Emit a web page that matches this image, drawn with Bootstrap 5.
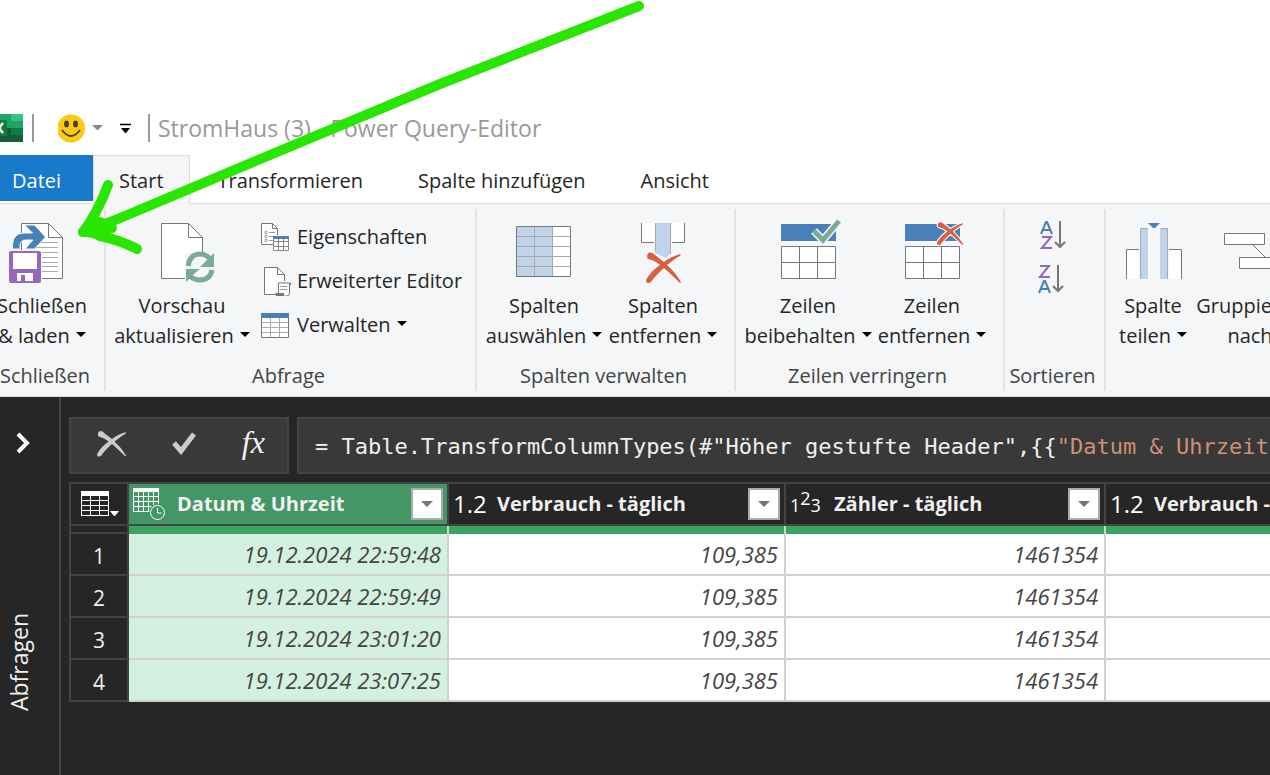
<!DOCTYPE html>
<html lang="de">
<head>
<meta charset="utf-8">
<meta name="viewport" content="width=device-width, initial-scale=1">
<title>StromHaus (3) - Power Query-Editor</title>
<link href="https://cdn.jsdelivr.net/npm/bootstrap@5.3.0/dist/css/bootstrap.min.css" rel="stylesheet">
<style>
  body { font-family: "Open Sans", "Noto Sans", sans-serif; font-size: 20px; line-height: 30px; color: #262626; background: #fff; overflow-x: hidden; }
  svg { display: block; flex: none; }
  button, .tab-link { white-space: nowrap; }

  .titlebar { padding-top: 100px; height: 155px; color: #999; }
  .titlebar .doc-title { font-size: 23px; }
  .divider { width: 2px; height: 28px; background: #999; }
  .plain-btn { border: 0; padding: 0; background: none; color: inherit; }

  .tab-strip { height: 49px; border-bottom: 1px solid #dadbdc; }
  .tab-link { display: flex; align-items: center; height: 49px; padding: 2px 26px 0 27px; color: #262626; text-decoration: none; border: 1px solid transparent; border-bottom: 0; }
  .tab-link.current { background: #f5f6f7; border-color: #dadbdc; padding-left: 25px; padding-right: 25px; }
  .tab-link.file-tab { width: 93px; height: 46px; padding: 4px 11px 0; background: #1979ca; color: #fff; }

  .ribbon { background: #f5f6f7; padding: 5px 0; border-bottom: 1px solid #d5d6d7; overflow: hidden; }
  .ribbon-group { flex: none; display: flex; flex-direction: column; height: 182px; border-right: 2px solid #e2e3e4; }
  .tool-row { display: flex; padding-left: 6px; }
  .group-title { margin-top: auto; padding-right: 4px; line-height: 30px; text-align: center; color: #444; white-space: nowrap; }
  .g-close { width: 106px; padding-right: 20px; }
  .g-query { width: 371px; }
  .g-cols { width: 259px; }
  .g-rows { width: 269px; }
  .g-sort { width: 101px; }
  .g-trans { border: 0; }
  .tool { border: 0; padding: 10px 4px 0; background: none; color: inherit; display: flex; flex-direction: column; align-items: center; flex: none; }
  .tool svg { margin-bottom: 8px; }
  .small-tools { padding: 6px 0 0 9px; }
  .sort-tools { padding: 4px 4px 0 0; }
  .tool-sm { border: 0; padding: 0; height: 44px; background: none; color: inherit; display: flex; align-items: center; gap: 6px; }
  .drop::after { content: ""; display: inline-block; margin-left: 6px; vertical-align: 6px; border: 5px solid transparent; border-top-color: #000; border-bottom: 0; }
  .w-140 { width: 140px; } .w-122 { width: 122px; } .w-116 { width: 116px; } .w-132 { width: 132px; } .w-82 { width: 82px; } .w-104 { width: 104px; }

  .workspace { background: #262626; color: #f0f0f0; }
  .side-rail { flex: none; width: 61px; border-right: 2px solid #444; padding: 34px 14px 64px 4px; }
  .rail-toggle { margin-left: 10px; }
  .rail-label { writing-mode: vertical-rl; transform: rotate(180deg); font-size: 23px; line-height: 30px; }
  .editor-pane { padding: 20px 0 0 8px; min-width: 0; overflow: hidden; }
  .bar-box { height: 57px; background: #393939; border: 2px solid #444; }
  .formula-btns { flex: none; width: 220px; padding: 0 0 4px 4px; }
  .formula-text { border-right: 0; padding-left: 16px; font: 22px/55px "DejaVu Sans Mono", "Liberation Mono", monospace; white-space: pre; overflow: hidden; min-width: 0; }
  .literal { color: #ce9178; }
  .fx { font: italic 32px/40px "Liberation Serif", serif; color: #f0f0f0; }

  .data-grid { table-layout: fixed; width: 1374px; border-collapse: separate; border-spacing: 0; margin-top: 8px; line-height: 30px; }
  .data-grid th, .data-grid td { padding: 0; border: 0 solid #444; border-width: 0 2px 2px 0; }
  .data-grid .idx { border-left-width: 2px; text-align: center; font-weight: 400; color: #f0f0f0; padding-top: 4px; font-size: 21px; }
  .data-grid .corner { border-left-width: 2px; padding-left: 2px; }
  .data-grid thead .head th { border-top-width: 2px; height: 44px; }
  .data-grid .head .on { background: #449667; }
  .data-grid .quality td { height: 8px; line-height: 0; background: #38a560; border-color: #d0d0d0; border-bottom: 0; }
  .data-grid .quality th { height: 8px; line-height: 0; padding: 0; }
  .data-grid tbody td { height: 42px; background: #fff; border-color: #d0d0d0; text-align: right; font-size: 22px; font-style: italic; color: #444; padding-right: 6px; }
  .data-grid tbody .on { background: #d4f0e0; }
  .head-cell { padding: 0 4px; font-weight: 700; white-space: nowrap; }
  .kind { flex: none; width: 44px; font: 500 24px/30px "Open Sans", sans-serif; color: #fff; }
  .kind small { font-size: 18px; }
  .kind .up { position: relative; top: -7px; }
  .filter-btn { width: 32px; height: 32px; padding: 0; border: 2px solid #aaa; background: #fff; }
  .filter-btn::after { content: ""; display: block; width: 0; margin: auto; border: 6px solid transparent; border-top-color: #777; border-bottom: 0; }
  .pointer-arrow { position: absolute; left: 0; top: 0; pointer-events: none; }
</style>
</head>
<body class="d-flex flex-column min-vh-100 position-relative">
<svg width="0" height="0" class="position-absolute" aria-hidden="true">
  <defs>
    <path id="cross" d="M1 5C2 0 6 1 9 4Q14 8 18 11Q24 6 34 3L35 4Q27 9 21 14Q29 21 35 31L34 32Q25 23 18 17Q9 25 5 31Q0 34 0 29Q5 20 14 14Q8 9 2 8Q1 7 1 5Z"/>
  </defs>
</svg>

<header class="titlebar d-flex align-items-center">
  <svg width="24" height="28" viewBox="0 0 24 28" aria-label="Excel">
    <path fill="#21a366" d="M0 0h12v14H0z"/><path fill="#33c481" d="M11 0h11q1 0 1 1v13H11z"/>
    <path fill="#107c41" d="M0 14h23v-7H11v7z"/><path fill="#21a366" d="M11 7h12v7H11z"/><path fill="#107c41" d="M11 14h12v7H11z"/><path fill="#185c37" d="M0 14h11v7h12v7H0z"/>
    <path fill="#107c41" d="M0 6h6q1 0 1 1v14q0 1-1 1H0z"/><path d="M-5 9L3 19M3 9L-5 19" stroke="#fff" stroke-width="2.5"/>
  </svg>
  <span class="divider ms-2"></span>
  <button type="button" class="plain-btn d-flex align-items-center ms-4" aria-label="Smiley senden">
    <svg width="46" height="30" viewBox="1 0 46 30"><circle cx="14" cy="15.500" r="14" fill="#fdca12"/><ellipse cx="9.500" cy="11" rx="2.500" ry="3.500" fill="#444"/><ellipse cx="18.500" cy="11" rx="2.500" ry="3.500" fill="#444"/><path d="M5 17q9 12 18 0" fill="none" stroke="#444" stroke-width="2"/><path d="M35 12h11l-5 5h-1z" fill="#888"/></svg>
  </button>
  <button type="button" class="plain-btn ms-3" aria-label="Symbolleiste anpassen">
    <svg width="12" height="12" viewBox="2 0 12 12"><path d="M2 2.500h11" stroke="#000" stroke-width="1.500"/><path d="M3 6h9l-4 5H7z"/></svg>
  </button>
  <span class="divider ms-3"></span>
  <span class="doc-title ms-2">StromHaus (3) - Power Query-Editor</span>
</header>

<nav class="tab-strip d-flex">
  <a href="#" class="tab-link file-tab">Datei</a>
  <a href="#" class="tab-link current">Start</a>
  <a href="#" class="tab-link">Transformieren</a>
  <a href="#" class="tab-link">Spalte hinzufügen</a>
  <a href="#" class="tab-link">Ansicht</a>
</nav>

<section class="ribbon d-flex" aria-label="Start">
  <div class="ribbon-group g-close">
    <div class="d-flex justify-content-center">
      <button type="button" class="tool">
        <svg width="80" height="64" viewBox="3 219 80 64"><path d="M22.500 223.500h27l14 14v41h-41z" fill="#fff" stroke="#777"/><path d="M49.500 223.500v14h14" fill="none" stroke="#777"/><path d="M30 242.500h29M30 247.500h29M30 252.500h29M30 257.500h29M30 262.500h29M30 266.500h29M30 271.500h29" stroke="#aaa"/><path d="M13.500 249v-5q1-11 12-11h8l-8-8h10l11 12-11 12H26l8-9h-7q-6 0-6 6v3z" fill="#4a80b9" stroke="#f5f6f7"/><path d="M9 250h34v35H9z" fill="#f5f6f7"/><rect x="10" y="251" width="32" height="32" rx="2" fill="#9668b8"/><path d="M14 253h24v16H14zM18 273h16v8h-8v-6h-4v6h-4z" fill="#fff"/></svg>
        <span>Schließen</span><span class="drop">&amp; laden</span>
      </button>
    </div>
    <div class="group-title">Schließen</div>
  </div>

  <div class="ribbon-group g-query">
    <div class="tool-row">
      <button type="button" class="tool w-140">
        <svg width="80" height="64" viewBox="142 219 80 64"><path d="M161.500 223.500h27l14 14v41h-41z" fill="#fff" stroke="#777"/><path d="M188.500 223.500v14h14" fill="none" stroke="#777"/><path d="M185 253h30v32h-30z" fill="#f5f6f7"/><g fill="none" stroke="#7aab98" stroke-width="5"><path d="M188 266q2-12 12-12 6 0 10 5"/><path d="M212 270q-2 10-12 10-6 0-10-4"/></g><path d="M214 253v14h-14l5-5zM186 282v-13h14l-5 4z" fill="#7aab98"/></svg>
        <span>Vorschau</span><span class="drop">aktualisieren</span>
      </button>
      <div class="small-tools">
        <button type="button" class="tool-sm">
          <svg width="30" height="30" viewBox="0 0 30 30"><path d="M.500 1.500h11l5 5v16H.500z" fill="#fff" stroke="#777"/><path d="M11.500 1.500v5h5" fill="none" stroke="#777"/><g fill="none" stroke="#999"><circle cx="5" cy="10.500" r="1.300"/><circle cx="5" cy="14.500" r="1.300"/><circle cx="5" cy="18.500" r="1.300"/><path d="M8 10.500h6M8 14.500h5M8 18.500h5"/></g><path d="M12 13h17v16H12z" fill="#fff" /><path d="M12.500 14.500h15v14h-15zM12.500 19.500h15M12.500 24.500h15M17.500 17v11M22.500 17v11" fill="none" stroke="#888"/><path d="M12 14h16v3H12z" fill="#4a80b9"/></svg>
          <span>Eigenschaften</span></button>
        <button type="button" class="tool-sm">
          <svg width="30" height="30" viewBox="0 0 30 30"><path d="M3.500 1.500h13l7 7v20h-20z" fill="#fff" stroke="#777"/><path d="M16.500 1.500v7h7" fill="none" stroke="#777"/><path d="M14 15h16v16H14z" fill="#f5f6f7"/><path d="M17.500 28v-11h11v10q0 3-3 3h-6" fill="#fff" stroke="#777"/><path d="M28 17h2v3M14 27h9v3h-8z" fill="#777"/><path d="M19 20.500h7M19 23.500h7" stroke="#999"/></svg>
          <span>Erweiterter Editor</span></button>
        <button type="button" class="tool-sm">
          <svg width="30" height="30" viewBox="0 0 30 30"><path d="M.500 3.500h27v24H.500z" fill="#fff" stroke="#777"/><path d="M1 12.500h26M1 17.500h26M1 22.500h26M9.500 7v20M18.500 7v20" stroke="#aaa"/><path d="M0 3h28v5H0z" fill="#4a80b9"/></svg>
          <span class="drop">Verwalten</span></button>
      </div>
    </div>
    <div class="group-title">Abfrage</div>
  </div>

  <div class="ribbon-group g-cols">
    <div class="tool-row">
      <button type="button" class="tool w-122">
        <svg width="60" height="64" viewBox="514 219 60 64"><path d="M516.500 226.500h54v50h-54z" fill="#fff"/><path d="M517 227h36v50h-36z" fill="#c1d3e8"/><path d="M516 236.500h54M516 246.500h54M516 256.500h54M516 266.500h54M534.500 227v50M552.500 227v50" stroke="#aaa"/><path d="M516.500 226.500h54v50h-54z" fill="none" stroke="#777"/></svg>
        <span>Spalten</span><span class="drop">auswählen</span>
      </button>
      <button type="button" class="tool w-116">
        <svg width="60" height="64" viewBox="633 219 60 64"><path d="M641 223h13v20h-13zM672 223h13v20h-13z" fill="#fff"/><path d="M641.500 223v19.500H654M684.500 223v19.500H672" fill="none" stroke="#777"/><path d="M655 223h16v30l-5 5-11-5z" fill="#c1d3e8"/><path d="M655.500 223v28M670.500 223v31" stroke="#aaa"/><use href="#cross" transform="translate(646 251)" fill="#d9603f" stroke="#f5f6f7" paint-order="stroke" stroke-width="3"/></svg>
        <span>Spalten</span><span class="drop">entfernen</span>
      </button>
    </div>
    <div class="group-title">Spalten verwalten</div>
  </div>

  <div class="ribbon-group g-rows">
    <div class="tool-row">
      <button type="button" class="tool w-132">
        <svg width="66" height="64" viewBox="775 219 66 64"><path d="M781 224h55v17h-55z" fill="#4a80b9"/><path d="M781.500 246.500h54v32h-54zM781.500 262.500h54M799.500 246v32M817.500 246v32" fill="#fff" stroke="#777"/><path d="M814 231l9 9 16-19" fill="none" stroke="#f5f6f7" stroke-width="8"/><path d="M814 231l9 9 16-19" fill="none" stroke="#7aab98" stroke-width="5"/></svg>
        <span>Zeilen</span><span class="drop">beibehalten</span>
      </button>
      <button type="button" class="tool w-116">
        <svg width="66" height="64" viewBox="899 219 66 64"><path d="M905 224h55v17h-55z" fill="#4a80b9"/><path d="M905.500 246.500h54v32h-54zM905.500 262.500h54M923.500 246v32M941.500 246v32" fill="#fff" stroke="#777"/><use href="#cross" transform="translate(937 221) scale(.75)" fill="#d9603f" stroke="#f5f6f7" paint-order="stroke" stroke-width="3"/></svg>
        <span>Zeilen</span><span class="drop">entfernen</span>
      </button>
    </div>
    <div class="group-title">Zeilen verringern</div>
  </div>

  <div class="ribbon-group g-sort">
    <div class="sort-tools d-flex flex-column align-items-center">
      <button type="button" class="tool-sm" aria-label="Aufsteigend sortieren">
        <svg width="26" height="32" viewBox="0 0 26 32" fill="none" stroke-width="2"><path d="M1 15L6 3h1l5 12M3 11h7" stroke="#4a80b9"/><path d="M2 18h9L2 29h10" stroke="#9668b8"/><path d="M20 2v26M15 23l5 5 5-5" stroke="#777"/></svg></button>
      <button type="button" class="tool-sm" aria-label="Absteigend sortieren">
        <svg width="30" height="32" viewBox="0 0 30 32" fill="none" stroke-width="2"><path d="M2 3h9L2 14h10" stroke="#9668b8"/><path d="M1 30L6 18h1l5 12M3 26h7" stroke="#4a80b9"/><path d="M20 2v26M15 23l5 5 5-5" stroke="#777"/></svg></button>
    </div>
    <div class="group-title">Sortieren</div>
  </div>

  <div class="ribbon-group g-trans">
    <div class="tool-row">
      <button type="button" class="tool w-82">
        <svg width="60" height="64" viewBox="1123 219 60 64"><path d="M1126 249h13v30h-13zM1169 249h13v30h-13z" fill="#fff"/><path d="M1126.500 279v-29.500H1139M1181.500 279v-29.500H1169" fill="none" stroke="#777"/><path d="M1140 228h8v51h-8zM1160 228h8v51h-8z" fill="#c1d3e8"/><path d="M1140.500 279v-50.500h7M1167.500 279v-50.500h-7" fill="none" stroke="#aaa"/><path d="M1148 223h12l-5 5h-2z" fill="#4a80b9"/></svg>
        <span>Spalte</span><span class="drop">teilen</span>
      </button>
      <button type="button" class="tool w-104 ms-1">
        <svg width="60" height="64" viewBox="1220 219 60 64"><path d="M1252 244l13 13" stroke="#777"/><path d="M1224.500 233.500h40v11h-40zM1239.500 257.500h40v11h-40z" fill="#fff" stroke="#777"/></svg>
        <span>Gruppieren</span><span>nach</span>
      </button>
    </div>
  </div>
</section>

<main class="workspace d-flex flex-grow-1">
  <aside class="side-rail d-flex flex-column justify-content-between align-items-start">
    <button type="button" class="plain-btn rail-toggle" aria-label="Abfragen einblenden"><svg width="18" height="24" viewBox="0 0 18 24"><path d="M4 3l9 9-9 9" fill="none" stroke="#fff" stroke-width="4"/></svg></button>
    <span class="rail-label">Abfragen</span>
  </aside>
  <div class="editor-pane flex-grow-1">
    <div class="d-flex gap-2">
      <div class="bar-box formula-btns d-flex align-items-center justify-content-around">
        <button type="button" class="plain-btn" aria-label="Abbrechen"><svg width="30" height="30" viewBox="0 0 36 34"><use href="#cross" fill="#ccc"/></svg></button>
        <button type="button" class="plain-btn" aria-label="Übernehmen"><svg width="26" height="26" viewBox="0 0 26 26"><path d="M3 12l7 8L23 3" fill="none" stroke="#ccc" stroke-width="5"/></svg></button>
        <button type="button" class="plain-btn fx pb-1">fx</button>
      </div>
      <div class="bar-box formula-text flex-grow-1" role="textbox" contenteditable="true" spellcheck="false" aria-label="Formel">= Table.TransformColumnTypes(#"Höher gestufte Header",{{<span class="literal">"Datum &amp; Uhrzeit"</span></div>
    </div>

    <table class="data-grid">
      <colgroup><col style="width:60px"><col style="width:320px"><col style="width:337px"><col style="width:320px"><col style="width:337px"></colgroup>
      <thead>
        <tr class="head">
          <th class="corner"><button type="button" class="plain-btn d-block mx-auto" aria-label="Tabellenmenü"><svg width="38" height="26" viewBox="0 0 38 26"><path d="M0 0h28v25H0z" fill="#fff"/><path d="M1 5h8v4H1zM10 5h8v4h-8zM19 5h8v4h-8zM1 10h8v4H1zM10 10h8v4h-8zM19 10h8v4h-8zM1 15h8v4H1zM10 15h8v4h-8zM19 15h8v4h-8zM1 20h8v4H1zM10 20h8v4h-8zM19 20h8v4h-8z" fill="#262626"/><path d="M29 20h9l-4 5h-1z" fill="#fff"/></svg></button></th>
          <th class="on"><div class="head-cell d-flex align-items-center"><span class="kind"><svg width="33" height="33" viewBox="0 0 33 33"><path d="M0 0h26v4H0z" fill="#fff"/><path d="M.500 4v20M5.500 4v20M10.500 4v20M15.500 4v20M20.500 4v14M25.500 4v13M0 8.500h26M0 13.500h26M0 18.500h20M0 23.500h17" stroke="#fff"/><circle cx="24.500" cy="24.500" r="8.500" fill="#449667"/><circle cx="24.500" cy="24.500" r="7" fill="none" stroke="#fff"/><path d="M24.500 20v5h4" fill="none" stroke="#fff"/></svg></span><span>Datum &amp; Uhrzeit</span><button type="button" class="filter-btn ms-auto" aria-label="Filter"></button></div></th>
          <th><div class="head-cell d-flex align-items-center"><span class="kind">1.2</span><span>Verbrauch - täglich</span><button type="button" class="filter-btn ms-auto" aria-label="Filter"></button></div></th>
          <th><div class="head-cell d-flex align-items-center"><span class="kind"><small>1<span class="up">2</span>3</small></span><span>Zähler - täglich</span><button type="button" class="filter-btn ms-auto" aria-label="Filter"></button></div></th>
          <th><div class="head-cell d-flex align-items-center"><span class="kind">1.2</span><span>Verbrauch - täglich</span><button type="button" class="filter-btn ms-auto" aria-label="Filter"></button></div></th>
        </tr>
        <tr class="quality" aria-hidden="true"><th class="idx"></th><td></td><td></td><td></td><td></td></tr>
      </thead>
      <tbody>
        <tr><th class="idx">1</th><td class="on">19.12.2024 22:59:48</td><td>109,385</td><td>1461354</td><td></td></tr>
        <tr><th class="idx">2</th><td class="on">19.12.2024 22:59:49</td><td>109,385</td><td>1461354</td><td></td></tr>
        <tr><th class="idx">3</th><td class="on">19.12.2024 23:01:20</td><td>109,385</td><td>1461354</td><td></td></tr>
        <tr><th class="idx">4</th><td class="on">19.12.2024 23:07:25</td><td>109,385</td><td>1461354</td><td></td></tr>
      </tbody>
    </table>
  </div>
</main>

<svg class="pointer-arrow" width="650" height="260" viewBox="0 0 650 260" fill="none" stroke="#28e600" stroke-width="10" stroke-linecap="round" stroke-linejoin="round" aria-hidden="true">
  <path d="M639 6L440 84L258 160L113 221L83 232Q97 214 108 185"/><path d="M83 232Q94 232 100 236Q120 240 137 249"/><path d="M84 232L112 228L100 222" fill="#28e600"/>
</svg>
<script src="https://cdn.jsdelivr.net/npm/bootstrap@5.3.0/dist/js/bootstrap.bundle.min.js"></script>
</body>
</html>
